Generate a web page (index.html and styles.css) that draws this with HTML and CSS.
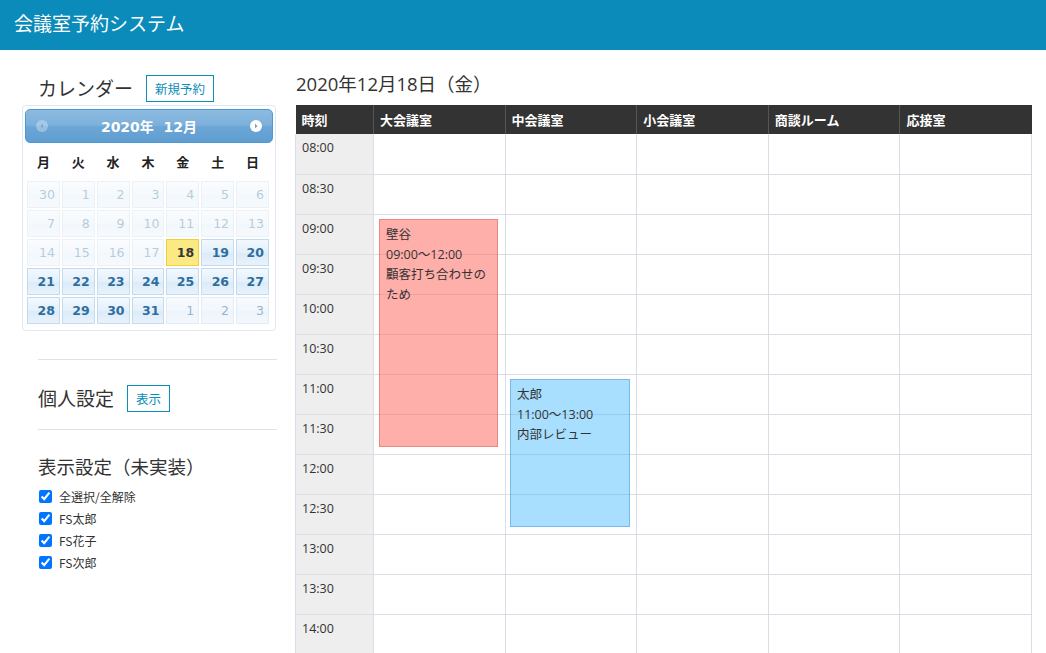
FILE: index.html
```html
<!DOCTYPE html>
<html lang="ja">
<head>
<meta charset="utf-8">
<title>会議室予約システム</title>
<link rel="stylesheet" href="styles.css">
</head>
<body>
<header class="topbar"><h1 class="brand">会議室予約システム</h1></header>
<div class="layout">
  <aside class="sidebar">
    <div class="sec-head">
      <h2 class="sec-title">カレンダー</h2>
      <button class="btn">新規予約</button>
    </div>
    <div class="dp">
      <div class="dp-header">
        <span class="dp-nav dp-prev"><svg width="12" height="12" viewBox="0 0 12 12"><circle cx="6" cy="6" r="6" fill="#fff"/><path d="M7 3.5 L4.5 6 L7 8.5Z" fill="#6fa6d4"/></svg></span>
        <span class="dp-title">2020年&nbsp; 12月</span>
        <span class="dp-nav dp-next"><svg width="12" height="12" viewBox="0 0 12 12"><circle cx="6" cy="6" r="6" fill="#fff"/><path d="M5 3.5 L7.5 6 L5 8.5Z" fill="#6fa6d4"/></svg></span>
      </div>
      <table class="dp-cal">
        <thead><tr><th>月</th><th>火</th><th>水</th><th>木</th><th>金</th><th>土</th><th>日</th></tr></thead>
        <tbody>
          <tr><td class="off"><a>30</a></td><td class="off"><a>1</a></td><td class="off"><a>2</a></td><td class="off"><a>3</a></td><td class="off"><a>4</a></td><td class="off"><a>5</a></td><td class="off"><a>6</a></td></tr>
          <tr><td class="off"><a>7</a></td><td class="off"><a>8</a></td><td class="off"><a>9</a></td><td class="off"><a>10</a></td><td class="off"><a>11</a></td><td class="off"><a>12</a></td><td class="off"><a>13</a></td></tr>
          <tr><td class="off"><a>14</a></td><td class="off"><a>15</a></td><td class="off"><a>16</a></td><td class="off"><a>17</a></td><td class="today"><a>18</a></td><td><a>19</a></td><td><a>20</a></td></tr>
          <tr><td><a>21</a></td><td><a>22</a></td><td><a>23</a></td><td><a>24</a></td><td><a>25</a></td><td><a>26</a></td><td><a>27</a></td></tr>
          <tr><td><a>28</a></td><td><a>29</a></td><td><a>30</a></td><td><a>31</a></td><td class="other"><a>1</a></td><td class="other"><a>2</a></td><td class="other"><a>3</a></td></tr>
        </tbody>
      </table>
    </div>
    <hr class="sep sep-first">
    <div class="sec-head sec-personal">
      <h2 class="sec-title">個人設定</h2>
      <button class="btn">表示</button>
    </div>
    <hr class="sep">
    <h2 class="sec-title sec-display">表示設定（未実装）</h2>
    <ul class="checks">
      <li><label><input type="checkbox" checked> 全選択/全解除</label></li>
      <li><label><input type="checkbox" checked> FS太郎</label></li>
      <li><label><input type="checkbox" checked> FS花子</label></li>
      <li><label><input type="checkbox" checked> FS次郎</label></li>
    </ul>
  </aside>
  <main class="main">
    <h2 class="date-title">2020年12月18日（金）</h2>
    <div class="sched">
      <table class="grid">
        <colgroup><col class="c-time"><col class="c-room"><col class="c-room"><col class="c-room"><col class="c-room"><col class="c-room"></colgroup>
        <thead><tr><th>時刻</th><th>大会議室</th><th>中会議室</th><th>小会議室</th><th>商談ルーム</th><th>応接室</th></tr></thead>
        <tbody>
          <tr><td class="t">08:00</td><td></td><td></td><td></td><td></td><td></td></tr>
          <tr><td class="t">08:30</td><td></td><td></td><td></td><td></td><td></td></tr>
          <tr><td class="t">09:00</td><td></td><td></td><td></td><td></td><td></td></tr>
          <tr><td class="t">09:30</td><td></td><td></td><td></td><td></td><td></td></tr>
          <tr><td class="t">10:00</td><td></td><td></td><td></td><td></td><td></td></tr>
          <tr><td class="t">10:30</td><td></td><td></td><td></td><td></td><td></td></tr>
          <tr><td class="t">11:00</td><td></td><td></td><td></td><td></td><td></td></tr>
          <tr><td class="t">11:30</td><td></td><td></td><td></td><td></td><td></td></tr>
          <tr><td class="t">12:00</td><td></td><td></td><td></td><td></td><td></td></tr>
          <tr><td class="t">12:30</td><td></td><td></td><td></td><td></td><td></td></tr>
          <tr><td class="t">13:00</td><td></td><td></td><td></td><td></td><td></td></tr>
          <tr><td class="t">13:30</td><td></td><td></td><td></td><td></td><td></td></tr>
          <tr><td class="t">14:00</td><td></td><td></td><td></td><td></td><td></td></tr>
        </tbody>
      </table>
      <div class="event ev-red" style="top:114px;left:84px;height:228px;width:119px">壁谷<br>09:00～12:00<br>顧客打ち合わせのため</div>
      <div class="event ev-blue" style="top:274px;left:215px;height:148px;width:120px">太郎<br>11:00～13:00<br>内部レビュー</div>
    </div>
  </main>
</div>
</body>
</html>
```
FILE: styles.css
```css
html, body { margin: 0; padding: 0; }
body {
  font-family: "Open Sans", "Noto Sans CJK JP", sans-serif;
  color: #333;
  background: #fff;
  overflow: hidden;
  height: 653px;
}
.topbar {
  height: 50px;
  background: #0a8bba;
  display: flex;
  align-items: center;
  padding-left: 14px;
}
.brand {
  margin: 0;
  font-family: "Noto Sans CJK JP", sans-serif;
  font-weight: 400;
  font-size: 19px;
  color: #fff;
  position: relative;
  top: -3px;
}
.layout {
  display: flex;
  padding-left: 22px;
  gap: 18px;
}
.sidebar {
  width: 255px;
  flex: none;
}
.sec-head {
  display: flex;
  align-items: center;
  gap: 13px;
  padding-left: 16px;
  margin-top: 25px;
  height: 26px;
}
.sec-title {
  margin: 0;
  font-family: "Noto Sans CJK JP", sans-serif;
  font-weight: 400;
  font-size: 19px;
  color: #333;
  line-height: 26px;
}
.btn {
  font-family: "Noto Sans CJK JP", sans-serif;
  font-size: 12.5px;
  color: #0b8cb9;
  background: #fff;
  border: 1px solid #0b8cb9;
  height: 27px;
  padding: 0 8px;
  line-height: 25px;
  border-radius: 0;
}
.dp {
  margin-top: 4px;
  width: 248px;
  border: 1px solid #dde9f3;
  border-radius: 4px;
  padding: 3px 2px 3px 2px;
  height: 218px;
  box-sizing: content-box;
}
.dp-header {
  height: 32px;
  border: 1px solid #4a9ad6;
  border-radius: 5px;
  background: linear-gradient(#8dbbe0 0%, #7cb0db 48%, #6ca6d6 52%, #5f9dd1 100%);
  display: flex;
  align-items: center;
  justify-content: space-between;
  padding: 0 10px 0 10px;
}
.dp-nav { display: flex; width: 12px; height: 12px; }
.dp-prev { opacity: 0.3; }
.dp-title {
  font-family: "DejaVu Sans", "Noto Sans CJK JP", sans-serif;
  color: #fff;
  font-weight: 700;
  font-size: 14px;
}
.dp-cal {
  width: 244px;
  border-collapse: collapse;
  margin: 0 1px;
  table-layout: fixed;
}
.dp-cal th {
  font-family: "Noto Sans CJK JP", sans-serif;
  font-weight: 700;
  font-size: 13px;
  color: #222;
  height: 37px;
  padding: 0;
  text-align: center;
}
.dp-cal td { padding: 1px; }
.dp-cal a {
  display: block;
  height: 25px;
  line-height: 26px;
  text-align: right;
  padding-right: 4px;
  border: 1px solid #c5dbec;
  background: linear-gradient(#f2f8fe 0%, #e4f0fb 50%, #dbebf9 52%, #e8f2fc 100%);
  color: #2e6e9e;
  font-family: "DejaVu Sans", sans-serif;
  font-weight: 700;
  font-size: 12.5px;
}
.dp-cal td.off a { opacity: 0.35; font-weight: 400; }
.dp-cal td.other a { opacity: 0.5; font-weight: 400; }
.dp-cal td.today a {
  border-color: #f5cf3a;
  background: #fbe983;
  color: #363636;
}
.sep {
  border: 0;
  border-top: 1px solid #e2e2e2;
  margin: 29px 0 0 16px;
  height: 0;
}
.sep-first { margin-top: 28px; }
.sec-personal { margin-top: 25px; }
.sec-personal + .sep { margin-top: 18px; }
.sec-display {
  padding-left: 16px;
  margin-top: 23px;
  font-size: 18.5px;
}
.checks {
  list-style: none;
  margin: 6px 0 0 16px;
  padding: 0;
}
.checks li {
  height: 22px;
  display: flex;
  align-items: center;
}
.checks label {
  font-family: "Noto Sans CJK JP", sans-serif;
  font-size: 12px;
  color: #333;
  display: flex;
  align-items: center;
  gap: 3px;
}
.checks input {
  margin: 0 4px 0 1px;
  width: 13px;
  height: 13px;
  accent-color: #0075ff;
}
.main {
  width: 737px;
  flex: none;
}
.date-title {
  margin: 22px 0 0 1px;
  font-family: "Open Sans", "Noto Sans CJK JP", sans-serif;
  font-weight: 400;
  font-size: 18.5px;
  line-height: 24px;
  color: #333;
  height: 33px;
}
.sched { position: relative; }
.grid {
  width: 737px;
  border-collapse: collapse;
  table-layout: fixed;
}
.c-time { width: 78px; }
.grid th {
  background: #333;
  color: #fff;
  font-family: "Noto Sans CJK JP", sans-serif;
  font-weight: 700;
  font-size: 13px;
  text-align: left;
  height: 29px;
  padding: 0 6px;
  border-left: 1px solid #555;
  box-sizing: border-box;
}
.grid th:first-child { border-left: 0; }
.grid td {
  height: 40px;
  box-sizing: border-box;
  border: 1px solid #dcdde6;
  border-top: 0;
  padding: 0 6px;
  vertical-align: top;
}
.grid td.t {
  background: #eee;
  font-size: 12.5px;
  line-height: 28px;
  color: #333;
}
.event {
  position: absolute;
  box-sizing: border-box;
  padding: 5px 6px;
  font-family: "Open Sans", "Noto Sans CJK JP", sans-serif;
  font-size: 12.5px;
  line-height: 20px;
  color: #333;
}
.ev-red {
  background: rgba(255, 110, 100, 0.55);
  border: 1px solid rgba(190, 60, 60, 0.35);
}
.ev-blue {
  background: rgba(70, 185, 252, 0.47);
  border: 1px solid rgba(40, 120, 190, 0.35);
}
```
